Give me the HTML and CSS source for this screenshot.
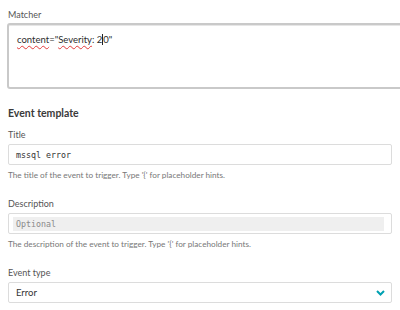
FILE: index.html
```html
<!DOCTYPE html>
<html lang="en">

<head>
    <meta charset="UTF-8">
    <meta name="viewport" content="width=device-width, initial-scale=1.0">
    <title>Log event</title>
    <link rel="stylesheet" href="styles.css">
</head>

<body>
    <div class="panel">
        <label class="field-label">Matcher</label>
        <div class="matcher-box">
            <span class="typo">content</span>="<span class="typo">Severity</span>: 2<span class="caret"></span>0"
        </div>

        <h2 class="section-title">Event template</h2>

        <label class="field-label">Title</label>
        <div class="text-input mono">mssql error</div>
        <div class="hint">The title of the event to trigger. Type '{' for placeholder hints.</div>

        <label class="field-label gap-top">Description</label>
        <div class="text-input">
            <div class="placeholder-field mono">Optional</div>
        </div>
        <div class="hint">The description of the event to trigger. Type '{' for placeholder hints.</div>

        <label class="field-label gap-top">Event type</label>
        <div class="text-input select">
            <span>Error</span>
            <svg class="chevron" width="9" height="6" viewBox="0 0 9 6">
                <path d="M1 1 L4.5 4.5 L8 1" fill="none" stroke="#00a1b2" stroke-width="2" />
            </svg>
        </div>
        <div class="hint">The type of the event to trigger.</div>
    </div>
</body>

</html>
```

FILE: styles.css
```css
body {
    margin: 0;
    background-color: #fff;
    font-family: Lato, "Open Sans", sans-serif;
    color: #454646;
    overflow: hidden;
}

.panel {
    padding: 9px 0 0 7px;
    width: 385px;
}

.field-label {
    display: block;
    font-size: 9px;
    line-height: 12px;
    color: #555;
    padding-left: 1px;
    margin-bottom: 3px;
}

.gap-top {
    margin-top: 18px;
}

.matcher-box {
    width: 400px;
    height: 66px;
    box-sizing: border-box;
    border: 2px solid #c9c9c9;
    border-radius: 3px;
    box-shadow: inset 0 1px 0 #e6e6e6;
    padding: 8px 8px;
    font-size: 9.5px;
    line-height: 14px;
    color: #2c2c2c;
    margin-top: -1px;
}

.typo {
    text-decoration: underline wavy #e23b3b;
    text-decoration-thickness: 1px;
    text-underline-offset: 2px;
}

.caret {
    display: inline-block;
    width: 1px;
    height: 11px;
    background: #222;
    vertical-align: -2px;
}

.section-title {
    font-size: 10.5px;
    line-height: 14px;
    font-weight: bold;
    color: #3a3a3a;
    margin: 17px 0 9px 1px;
}

.text-input {
    display: flex;
    align-items: center;
    height: 21px;
    box-sizing: border-box;
    margin-left: 1px;
    border: 1px solid #dcdcdc;
    border-radius: 2px;
    padding: 0 7px;
    font-size: 9.5px;
    color: #333;
}

.mono {
    font-family: "DejaVu Sans Mono", monospace;
    font-size: 8.3px;
}

.text-input .placeholder-field {
    flex: 1;
    height: 14px;
    line-height: 14px;
    margin-left: -3px;
    padding-left: 3px;
    background: #efefef;
    color: #8a8a8a;
}

.select {
    justify-content: space-between;
    font-size: 9.5px;
    padding-right: 6px;
}

.chevron {
    display: block;
}

.hint {
    font-size: 8.2px;
    line-height: 12px;
    color: #777;
    margin-top: 4px;
    padding-left: 1px;
}

.hint + .gap-top {
    margin-top: 17px;
}
```
